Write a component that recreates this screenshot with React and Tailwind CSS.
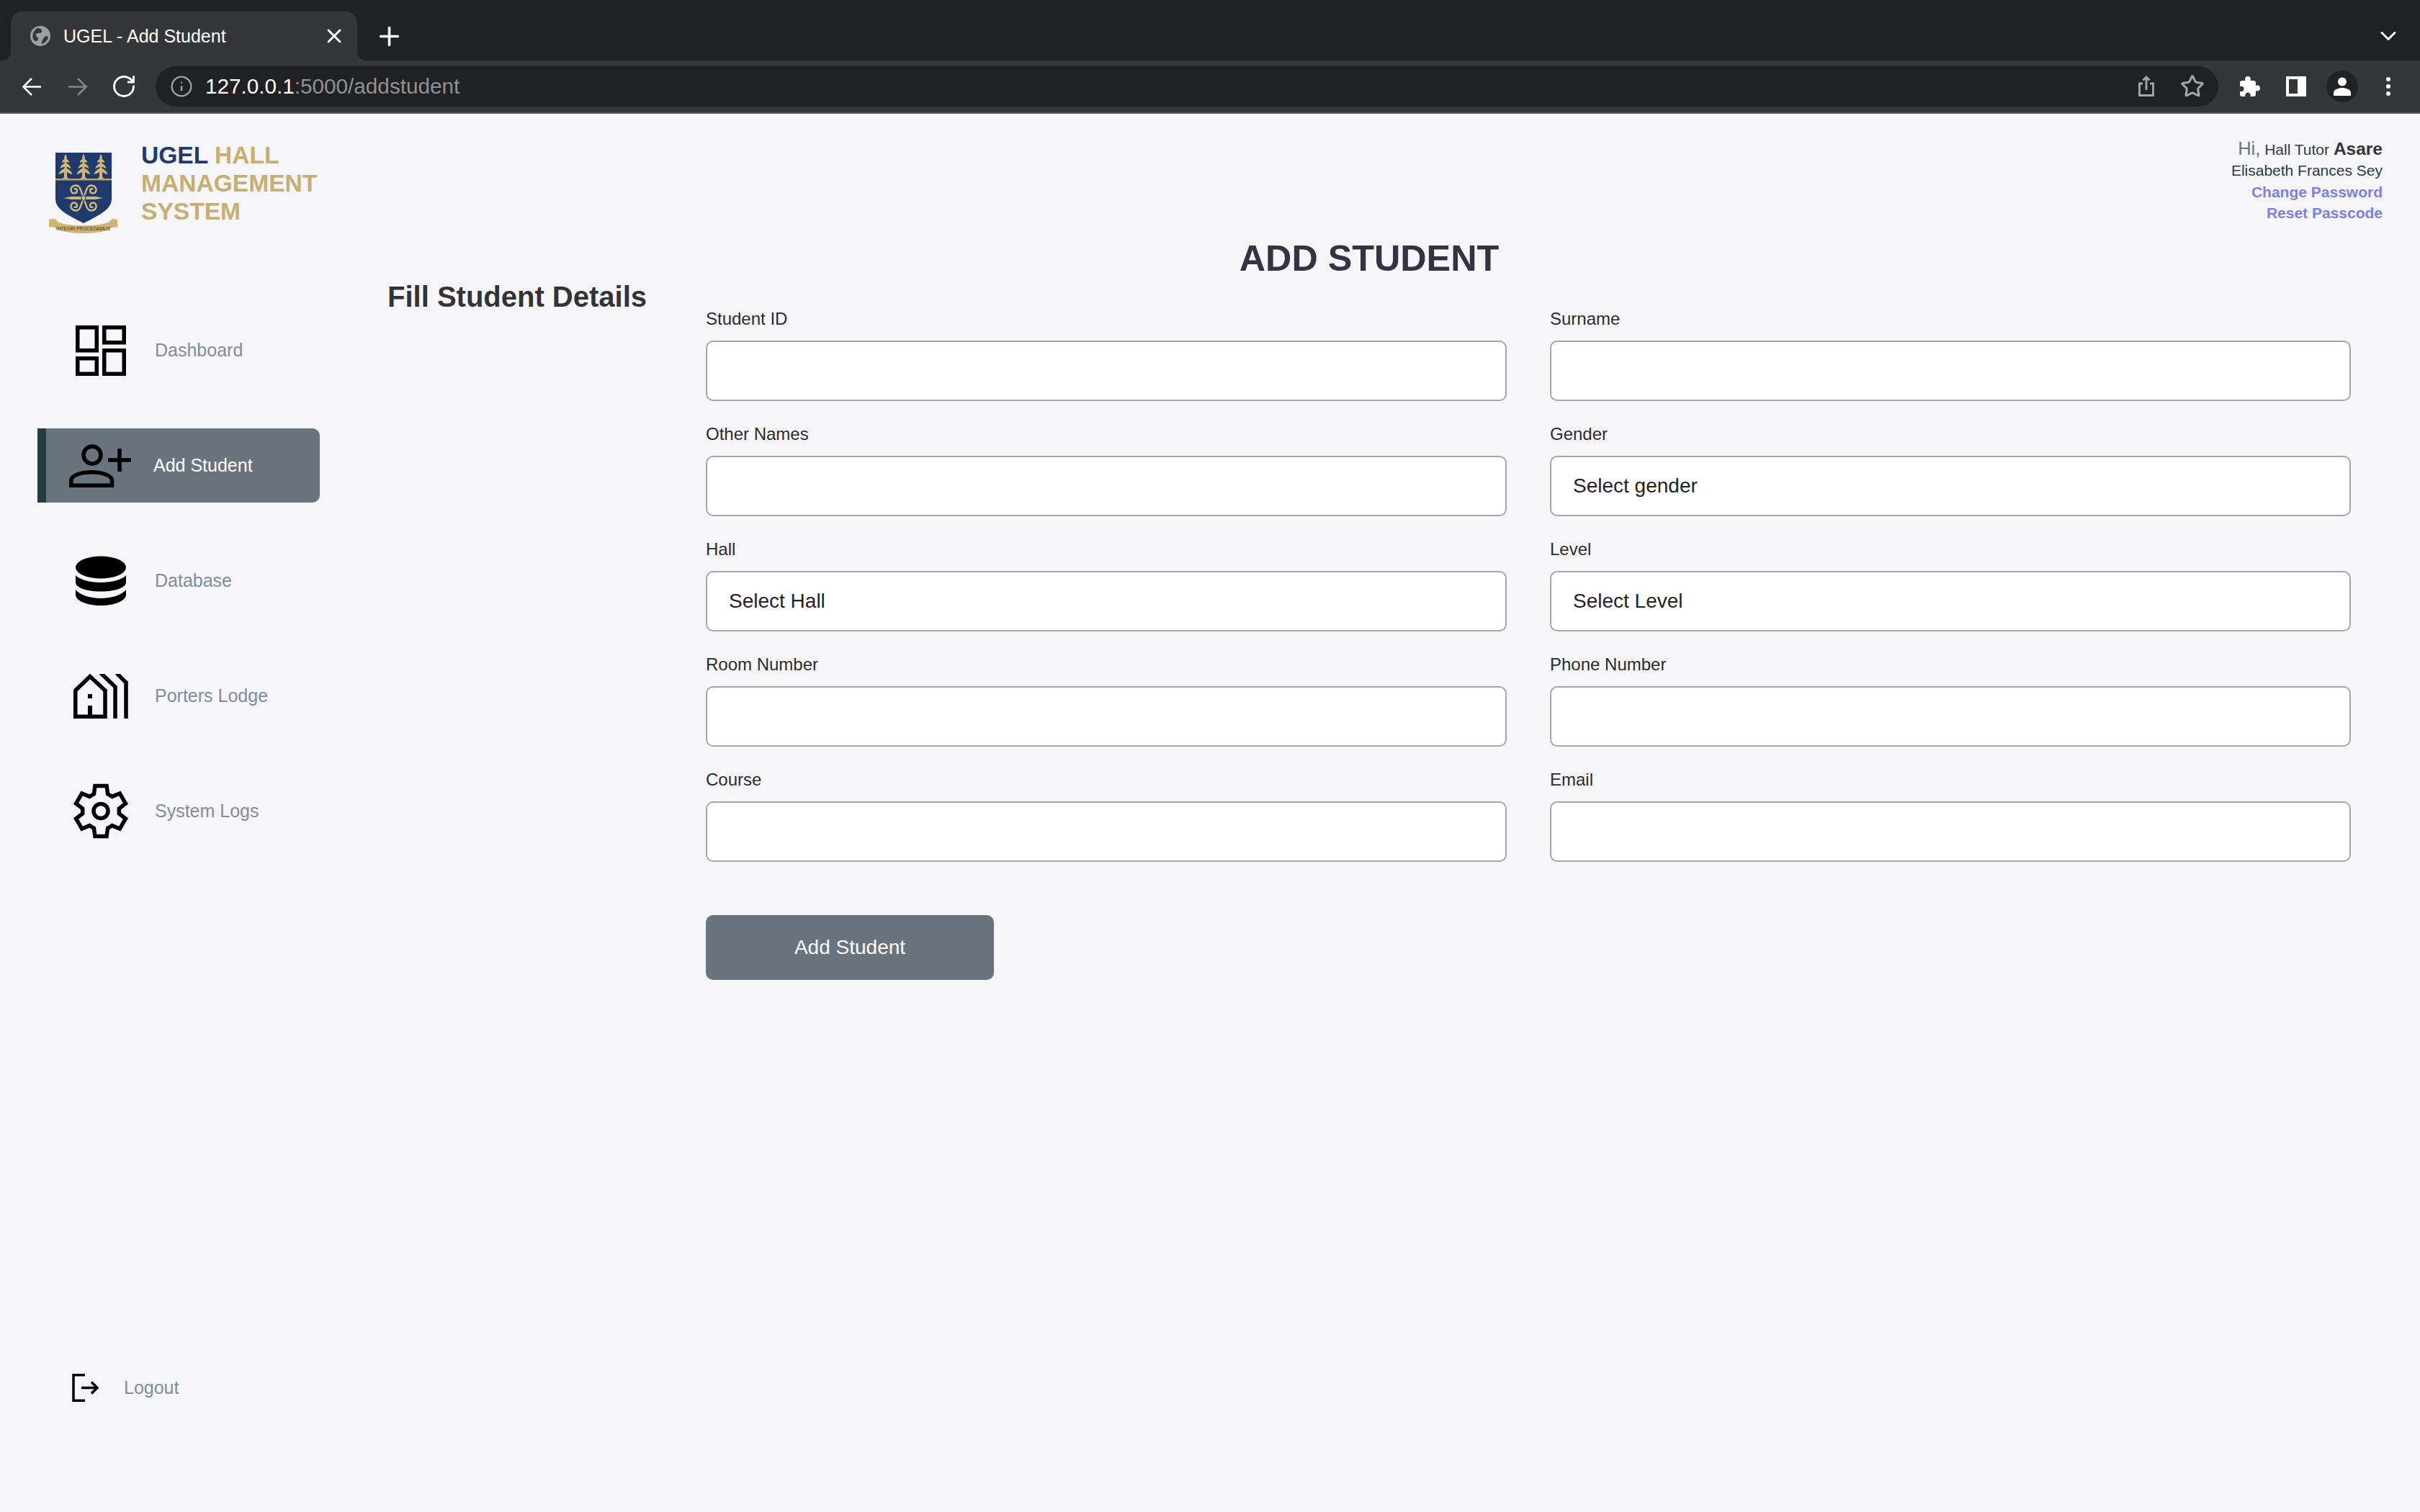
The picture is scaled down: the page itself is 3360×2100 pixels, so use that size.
import React from 'react';
import { RotateCw, Info, Star, Plus, X, ChevronDown } from 'lucide-react';

function DashboardIcon() {
  return (
    <svg width="70" height="70" viewBox="0 0 70 70" fill="none" stroke="#000" strokeWidth="5.5">
      <rect x="2.75" y="2.75" width="26.5" height="32" />
      <rect x="39.75" y="2.75" width="27.5" height="21" />
      <rect x="2.75" y="45.75" width="26.5" height="21.5" />
      <rect x="39.75" y="34.75" width="27.5" height="32.5" />
    </svg>
  );
}

function UserPlusIcon() {
  return (
    <svg width="86" height="60" viewBox="0 0 86 60" fill="none" stroke="#000" strokeWidth="5.5">
      <circle cx="32" cy="15" r="12" />
      <path d="M2.75 57.25V50C2.75 43 18 38.75 31 38.75C44 38.75 59.5 43 59.5 50V57.25Z" />
      <path d="M54 22H86M70 6V38" />
    </svg>
  );
}

function DatabaseIcon() {
  return (
    <svg width="70" height="70" viewBox="0 0 70 70" fill="#000">
      <ellipse cx="35" cy="16" rx="35" ry="15.5" />
      <path d="M0 27C5 33 20 37 35 37C50 37 65 33 70 27V37C70 44 55 49.5 35 49.5C15 49.5 0 44 0 37Z" />
      <path d="M0 47C5 54 20 59 35 59C50 59 65 54 70 47V54C70 62 55 69 35 69C15 69 0 62 0 54Z" />
    </svg>
  );
}

function LodgeIcon() {
  return (
    <svg width="76" height="62" viewBox="0 0 76 62" fill="none" stroke="#000" strokeWidth="5.5">
      <path d="M2.75 59.25V23L23 3.5L44 23V59.25Z" />
      <path d="M23 44V59" strokeWidth="6" />
      <rect x="20" y="28" width="6" height="6" fill="#000" stroke="none" />
      <path d="M38 -1L58 18V62" />
      <path d="M60 -1L73 12V62" />
    </svg>
  );
}

// six teeth, same shape as the settings icon in the reference
function gearPoints() {
  const pts = [];
  for (let i = 0; i < 6; i++) {
    const a = -90 + i * 60;
    [[-22, 25.5], [-13, 36], [13, 36], [22, 25.5]].forEach(([d, r]) => {
      const t = ((a + d) * Math.PI) / 180;
      pts.push(`${(38 + r * Math.cos(t)).toFixed(1)},${(38.5 + r * Math.sin(t)).toFixed(1)}`);
    });
  }
  return pts.join(' ');
}

function GearIcon() {
  return (
    <svg width="76" height="77" viewBox="0 0 76 77" fill="none" stroke="#000" strokeWidth="5.5">
      <polygon points={gearPoints()} />
      <circle cx="38" cy="38.5" r="10" />
    </svg>
  );
}

function LogoutIcon() {
  return (
    <svg width="37" height="39" viewBox="0 0 37 39" fill="none" stroke="#000" strokeWidth="3.5">
      <path d="M18 1.75H2V37.25H18" />
      <path d="M13 19.5H35M27 11.5L35 19.5L27 27.5" />
    </svg>
  );
}

function Crest() {
  const tree = (x) => (
    <path
      key={x}
      transform={`translate(${x} 0)`}
      fill="#d2b878"
      d="M0 2C1.5 5 2.5 7 1.5 9C3.5 10 5 11.5 5 14C3.5 13.5 2.5 13 1.5 13V15C4 16 7 18.5 7.5 22C5 21 3 20 1.5 19.5V21.5C4 23 8.5 26 9.5 30C6.5 29.5 3.5 28 2 27V33C2 34.5 3.5 35.5 6 36.5H-6C-3.5 35.5 -2 34.5 -2 33V27C-3.5 28 -6.5 29.5 -9.5 30C-8.5 26 -4 23 -1.5 21.5V19.5C-3 20 -5 21 -7.5 22C-7 18.5 -4 16 -1.5 15V13C-2.5 13 -3.5 13.5 -5 14C-5 11.5 -3.5 10 -1.5 9C-2.5 7 -1.5 5 0 2Z"
    />
  );
  return (
    <svg width="95" height="114" viewBox="0 0 95 114">
      <path d="M9 0H87V64C87 78 72 86 48 98C24 86 9 78 9 64Z" fill="#1f3b6e" />
      {[23, 48, 72].map(tree)}
      <rect x="9" y="36" width="78" height="2.5" fill="#b9a46e" />
      <g fill="none" stroke="#d2b878" strokeWidth="2.4">
        <path d="M48 62C44 54 44 46 38 45.5C32 45.5 29 50 31 54C33 58 39 57 39 52.5C39 50 36 49.5 35 51" />
        <path d="M48 62C52 54 52 46 58 45.5C64 45.5 67 50 65 54C63 58 57 57 57 52.5C57 50 60 49.5 61 51" />
        <path d="M48 64C44 72 44 80 38 80.5C32 80.5 29 76 31 72C33 68 39 69 39 73.5C39 76 36 76.5 35 75" />
        <path d="M48 64C52 72 52 80 58 80.5C64 80.5 67 76 65 72C63 68 57 69 57 73.5C57 76 60 76.5 61 75" />
      </g>
      <path d="M20 63L31 61H65L75 63L65 65H31Z" fill="#d2b878" />
      <path d="M48 58L51.5 63L48 68L44.5 63Z" fill="#d2b878" stroke="#1f3b6e" strokeWidth="1" />
      <path d="M0 94C4 90 10 92 12 96C22 103 72 103 84 96C86 92 92 90 95 94V104C90 102 88 104 84 106C70 114 24 114 12 106C8 104 4 102 0 104Z" fill="#cfb678" />
      <text x="47.5" y="108" textAnchor="middle" fontSize="6.5" fill="#3a3320" fontFamily="'Liberation Sans', sans-serif">INTEGRI PROCEDAMUS</text>
    </svg>
  );
}

function BrowserChrome() {
  return (
    <div className="shrink-0">
      <div className="h-[84px] bg-[#202124] flex items-end pl-[15px] pr-[26px]">
        <div className="relative w-[481px] h-[68px] bg-[#35363a] rounded-t-[16px] flex items-center pl-[27px] pr-[16px] text-white">
          <span className="absolute left-[-12px] bottom-0 w-[12px] h-[12px] bg-[#35363a]">
            <span className="block w-full h-full bg-[#202124] rounded-br-[12px]"></span>
          </span>
          <span className="absolute right-[-12px] bottom-0 w-[12px] h-[12px] bg-[#35363a]">
            <span className="block w-full h-full bg-[#202124] rounded-bl-[12px]"></span>
          </span>
          <svg width="28" height="28" viewBox="0 0 28 28" className="shrink-0">
            <circle cx="14" cy="14" r="14" fill="#9aa0a6" />
            <path d="M10 3C15 3 17 6 16 8C14 11 9 9 8 12C7 15 11 15 11 18C11 21 8 22 5 20C2 15 3 7 10 3Z" fill="#35363a" />
            <path d="M22 14C24 14 25 15 25 16C24 20 21 23 17 25C15 25 16 22 17 20C18 17 20 15 22 14Z" fill="#35363a" />
          </svg>
          <span className="ml-[18px] text-[25px] leading-none whitespace-nowrap">UGEL - Add Student</span>
          <X size={32} strokeWidth={2.2} className="ml-auto" />
        </div>
        <div className="ml-[24px] h-[68px] flex items-center text-white">
          <Plus size={41} strokeWidth={2.1} />
        </div>
        <div className="ml-auto h-[68px] flex items-center text-white">
          <ChevronDown size={36} strokeWidth={2} />
        </div>
      </div>
      <div className="h-[74px] bg-[#35363a] border-b-2 border-[#55565a] flex items-center pl-[12px] pr-[12px]">
        <span className="w-[64px] flex justify-center">
          <svg width="28" height="27" viewBox="0 0 28 27" fill="none" stroke="#fff" strokeWidth="2.6">
            <path d="M27 13.5H3M14 2L2.5 13.5L14 25" />
          </svg>
        </span>
        <span className="w-[64px] flex justify-center">
          <svg width="28" height="27" viewBox="0 0 28 27" fill="none" stroke="#85868a" strokeWidth="2.6">
            <path d="M1 13.5H25M14 2L25.5 13.5L14 25" />
          </svg>
        </span>
        <span className="w-[64px] flex justify-center">
          <RotateCw size={36} strokeWidth={1.9} className="text-white" />
        </span>
        <div className="ml-[12px] flex-1 h-[56px] rounded-full bg-[#202124] flex items-center pl-[20px] pr-[19px]">
          <Info size={32} strokeWidth={1.8} className="text-[#9aa0a6]" />
          <span className="ml-[17px] text-[29.7px] leading-none">
            <span className="text-white">127.0.0.1</span>
            <span className="text-[#8f9195]">:5000/addstudent</span>
          </span>
          <svg width="24" height="30" viewBox="0 0 24 30" fill="none" stroke="#a6a7aa" strokeWidth="2.8" className="ml-auto mr-[35px]">
            <path d="M7 11H2.5V27.5H21.5V11H17" />
            <path d="M12 20V2M7.5 6.5L12 2L16.5 6.5" />
          </svg>
          <Star size={34} strokeWidth={2.1} className="text-[#a6a7aa]" />
        </div>
        <span className="ml-[12px] w-[64px] flex justify-center">
          <svg width="28" height="28" viewBox="0 0 28 28" fill="#fff">
            <path d="M3 6H7.5C6 2 8.5 0 11 0C13.5 0 16 2 14.5 6H19A3 3 0 0 1 22 9V13C26 11.5 28 14 28 16.5C28 19 26 21.5 22 20V25A3 3 0 0 1 19 28H14.5C15.5 25 13.5 22.5 11 22.5C8.5 22.5 6.5 25 7.5 28H3A3 3 0 0 1 0 25V21C3 22 5.5 20 5.5 17.5C5.5 15 3 13 0 14V9A3 3 0 0 1 3 6Z" />
          </svg>
        </span>
        <span className="w-[64px] flex justify-center">
          <span className="w-[28px] h-[28px] border-[4px] border-white bg-[#35363a] flex justify-end">
            <span className="w-[8px] h-full bg-white"></span>
          </span>
        </span>
        <span className="w-[64px] flex justify-center">
          <span className="w-[44px] h-[44px] rounded-full bg-[#202124] flex items-center justify-center">
            <svg width="24" height="26" viewBox="0 0 24 26" fill="#fff">
              <circle cx="12" cy="6.5" r="6" />
              <path d="M0 26V22C0 17 7 15 12 15C17 15 24 17 24 22V26Z" />
            </svg>
          </span>
        </span>
        <span className="w-[64px] flex flex-col items-center gap-[4px]">
          <span className="w-[6px] h-[6px] rounded-full bg-white"></span>
          <span className="w-[6px] h-[6px] rounded-full bg-white"></span>
          <span className="w-[6px] h-[6px] rounded-full bg-white"></span>
        </span>
      </div>
    </div>
  );
}

const navItems = [
  { label: 'Dashboard', icon: DashboardIcon },
  { label: 'Add Student', icon: UserPlusIcon, active: true },
  { label: 'Database', icon: DatabaseIcon },
  { label: 'Porters Lodge', icon: LodgeIcon },
  { label: 'System Logs', icon: GearIcon },
];

function Sidebar() {
  return (
    <aside className="w-[500px] shrink-0 flex flex-col">
      <div className="h-[277px] pl-[68px] pt-[54px] flex items-start">
        <Crest />
        <div className="ml-[33px] -mt-[16px] text-[33.6px] leading-[39px] font-bold text-[#c9ae72]">
          <span className="text-[#1f3b6e]">UGEL</span> HALL
          <br />
          MANAGEMENT
          <br />
          SYSTEM
        </div>
      </div>
      <nav className="flex flex-col gap-[57px]">
        {navItems.map((item) => (
          <a
            key={item.label}
            href="#"
            className={
              item.active
                ? 'ml-[52px] w-[392px] h-[103px] flex items-center border-l-[12px] border-[#263c44] bg-[#69747f] rounded-r-[10px] text-white text-[25px]'
                : 'ml-[52px] w-[392px] h-[103px] flex items-center border-l-[12px] border-transparent text-[#7f8ca3] text-[25px]'
            }
          >
            <span className={item.active ? 'w-[149px] flex justify-center' : 'w-[151px] flex justify-center'}>
              <item.icon />
            </span>
            {item.label}
          </a>
        ))}
      </nav>
      <a href="#" className="mt-auto mb-[153px] ml-[100px] h-[39px] flex items-center text-[25px] text-[#7f8ca3]">
        <LogoutIcon />
        <span className="ml-[35px]">Logout</span>
      </a>
    </aside>
  );
}

const fields = [
  { label: 'Student ID' },
  { label: 'Surname' },
  { label: 'Other Names' },
  { label: 'Gender', options: ['Select gender', 'Male', 'Female'] },
  { label: 'Hall', options: ['Select Hall'] },
  { label: 'Level', options: ['Select Level', '100', '200', '300', '400'] },
  { label: 'Room Number' },
  { label: 'Phone Number' },
  { label: 'Course' },
  { label: 'Email' },
];

function Field({ label, options }) {
  const boxClass =
    'block w-full h-[84px] rounded-[10px] border-2 border-[#a5a6a8] bg-white px-[30px] text-[28px] text-[#222] appearance-none outline-none';
  return (
    <div>
      <label className="block mb-[16px] text-[24px] leading-[28px] text-[#2b2b2b]">{label}</label>
      {options ? (
        <select className={boxClass}>
          {options.map((o) => (
            <option key={o}>{o}</option>
          ))}
        </select>
      ) : (
        <input type="text" className={boxClass} />
      )}
    </div>
  );
}

function Main() {
  return (
    <main className="flex-1 min-w-0 pt-[34px]">
      <div className="pr-[52px] text-right text-[21px] leading-[29.3px]">
        <div className="text-[#2d3d44]">
          <span className="text-[25.5px] text-[#6b7280]">Hi,</span> Hall Tutor{' '}
          <span className="text-[24.5px] font-bold text-[#333344]">Asare</span>
        </div>
        <div className="text-[#263c44]">Elisabeth Frances Sey</div>
        <a href="#" className="block font-bold text-[#7a80e8]">Change Password</a>
        <a href="#" className="block font-bold text-[#7a80e8]">Reset Passcode</a>
      </div>
      <div className="pl-[38px] pr-[96px]">
        <h1 className="mt-[20px] text-center text-[50.3px] leading-[58px] font-bold text-[#333344]">ADD STUDENT</h1>
        <div className="mt-[1px] flex">
          <h2 className="w-[442px] shrink-0 text-[40px] leading-[46px] font-bold text-[#333]">Fill Student Details</h2>
          <form className="flex-1 pt-[40px]">
            <div className="grid grid-cols-2 gap-x-[60px] gap-y-[32px]">
              {fields.map((f) => (
                <Field key={f.label} {...f} />
              ))}
            </div>
            <button
              type="button"
              className="mt-[74px] w-[400px] h-[90px] rounded-[10px] bg-[#69747f] text-white text-[28px]"
            >
              Add Student
            </button>
          </form>
        </div>
      </div>
    </main>
  );
}

export default function App() {
  return (
    <div className="w-[3360px] h-[2100px] flex flex-col bg-[#f6f6f9] overflow-hidden [font-family:'Liberation_Sans',sans-serif]">
      <BrowserChrome />
      <div className="flex flex-1 min-h-0">
        <Sidebar />
        <Main />
      </div>
    </div>
  );
}
